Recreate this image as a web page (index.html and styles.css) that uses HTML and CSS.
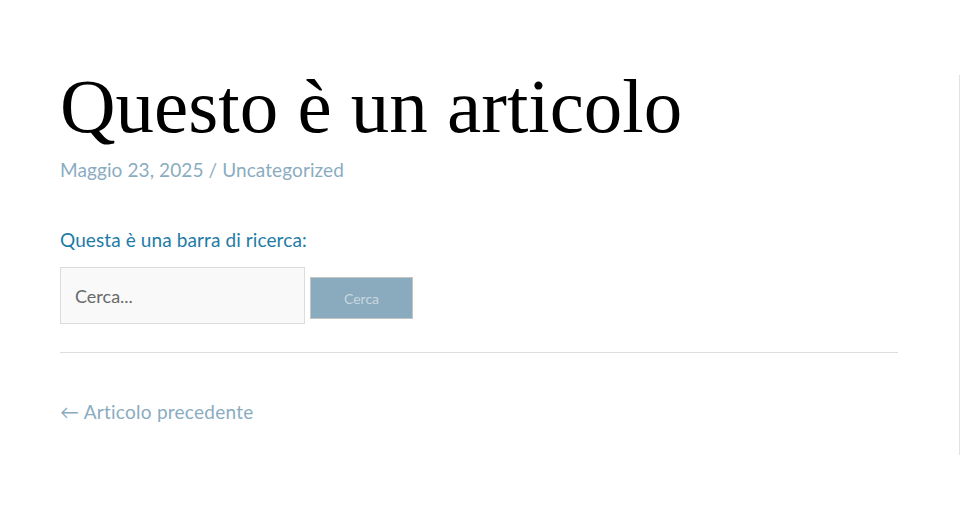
FILE: index.html
```html
<!DOCTYPE html>
<html lang="it">
<head>
<meta charset="utf-8">
<title>Questo è un articolo</title>
<link rel="stylesheet" href="styles.css">
</head>
<body>
<div class="page">
  <main class="content">
    <article class="post">
      <h1 class="title">Questo è un articolo</h1>
      <div class="meta"><a href="#">Maggio 23, 2025</a> / <a href="#">Uncategorized</a></div>
      <p class="intro">Questa è una barra di ricerca:</p>
      <form class="search">
        <input class="search-input" type="search" placeholder="Cerca...">
        <button class="search-btn" type="button">Cerca</button>
      </form>
    </article>
    <hr class="sep">
    <nav class="postnav"><a href="#">← Articolo precedente</a></nav>
  </main>
  <aside class="side"></aside>
</div>
</body>
</html>
```
FILE: styles.css
```css
html, body {
  margin: 0;
  padding: 0;
  background: #fff;
}
body {
  font-family: "Lato", "Noto Sans", sans-serif;
}
.page {
  display: flex;
  width: 961px;
  height: 516px;
}
.content {
  width: 838px;
  padding: 60px 0 0 60px;
  flex: none;
}
.side {
  margin-left: 61px;
  margin-top: 75px;
  width: 0;
  height: 380px;
  border-left: 1px solid #e2e2e2;
}
.title {
  margin: 0;
  font-family: "Liberation Serif", serif;
  font-weight: 400;
  font-size: 77px;
  line-height: 92px;
  color: #000;
}
.meta {
  margin-top: 4px;
  font-size: 19px;
  line-height: 28px;
  color: #8aacbf;
  letter-spacing: 0.1px;
}
.meta a, .postnav a {
  color: #8aacbf;
  text-decoration: none;
}
.intro {
  margin: 43px 0 0;
  font-size: 19px;
  line-height: 26px;
  color: #1e7ba6;
  letter-spacing: 0.1px;
}
.search {
  display: flex;
  align-items: flex-start;
  gap: 5px;
  margin-top: 14px;
}
.search-input {
  box-sizing: border-box;
  width: 245px;
  height: 57px;
  margin: 0;
  padding: 0 14px;
  background: #f9f9f9;
  border: 1px solid #dcdcdc;
  font-family: "Lato", "Noto Sans", sans-serif;
  font-size: 18px;
  color: #666;
  outline: none;
}
.search-input::placeholder {
  color: #6a6a6a;
}
.search-btn {
  box-sizing: border-box;
  width: 103px;
  height: 42px;
  margin: 10px 0 0;
  padding: 0;
  background: #8aabbd;
  border: 1px solid #c4c4c4;
  font-family: "Lato", "Noto Sans", sans-serif;
  font-size: 14px;
  color: #c9d7df;
}
.sep {
  margin: 28px 0 0;
  height: 0;
  border: 0;
  border-top: 1px solid #dddddd;
}
.postnav {
  margin-top: 46px;
  font-size: 19px;
  line-height: 26px;
  letter-spacing: 0.25px;
}
```
